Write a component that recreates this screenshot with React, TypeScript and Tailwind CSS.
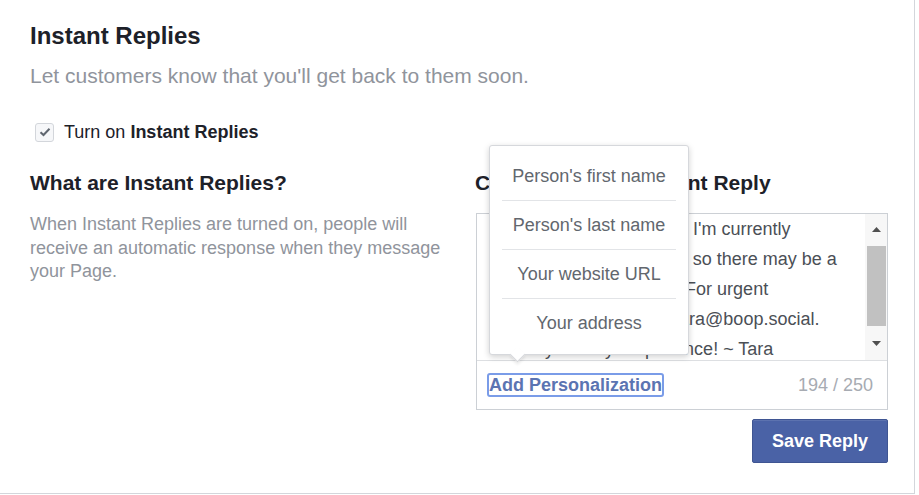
import React from "react";

const font = { fontFamily: '"Liberation Sans", Arial, sans-serif' };

export default function App() {
  return (
    <div className="w-[919px] h-[495px] bg-white overflow-hidden" style={font}>
      <div className="w-[915px] h-[494px] border-r border-b border-[#d3d6db] bg-white pl-[30px] pt-[22px]">
        <h1 className="text-[24px] leading-[27px] font-bold text-[#1d2129]">Instant Replies</h1>
        <p className="mt-[14px] text-[21px] leading-[26px] text-[#90949c]">
          Let customers know that you'll get back to them soon.
        </p>
        <div className="mt-[33px] flex items-center h-[20px]">
          <div className="ml-[5px] w-[19px] h-[19px] rounded-[3px] border border-[#d3d6db] bg-[#f6f7f9] flex items-center justify-center">
            <svg width="12" height="10" viewBox="0 0 12 10">
              <path d="M1.5 5.2 L4.5 8 L10.5 1.8" fill="none" stroke="#606770" strokeWidth="2" />
            </svg>
          </div>
          <span className="ml-[10px] text-[18px] text-[#1d2129]">
            Turn on <b>Instant Replies</b>
          </span>
        </div>
        <div className="mt-[28px] flex">
          <div className="w-[445px]">
            <h2 className="text-[21px] leading-[26px] font-bold text-[#1d2129]">What are Instant Replies?</h2>
            <p className="mt-[17px] w-[430px] text-[18px] leading-[23.5px] text-[#90949c]">
              When Instant Replies are turned on, people will receive an automatic response when they message your Page.
            </p>
          </div>
          <div className="w-[413px] relative">
            <h2 className="text-[21px] leading-[26px] font-bold text-[#1d2129]">Customize Your Instant Reply</h2>
            <div className="mt-[17px] ml-[1px] border border-[#ccd0d5] bg-white">
              <div className="h-[147px] flex border-b border-[#dddfe2]">
                <div className="flex-1 pl-[13px] text-[18px] leading-[30px] text-[#4b4f56] whitespace-nowrap overflow-hidden">
                  <div>Thanks for the message! I'm currently</div>
                  <div>out of the office all week, so there may be a</div>
                  <div>a delay in my response. For urgent</div>
                  <div>matters, kindly contact tara@boop.social.</div>
                  <div>Thank you for your patience! ~ Tara</div>
                </div>
                <div className="w-[22px] flex flex-col items-center bg-[#f7f7f7]">
                  <div className="h-[30px] flex items-center justify-center">
                    <svg width="9" height="5" viewBox="0 0 9 5"><path d="M0 5 L4.5 0 L9 5 Z" fill="#505050" /></svg>
                  </div>
                  <div className="w-[19px] h-[80px] bg-[#c1c1c1] mt-[2px]" />
                  <div className="flex-1 flex items-center justify-center">
                    <svg width="9" height="5" viewBox="0 0 9 5"><path d="M0 0 L9 0 L4.5 5 Z" fill="#505050" /></svg>
                  </div>
                </div>
              </div>
              <div className="h-[48px] flex items-center justify-between pl-[12px] pr-[14px]">
                <span className="text-[18px] leading-[20px] font-bold text-[#5b74b2] outline outline-2 outline-[#7a9ce8] rounded-[1px]">
                  Add Personalization
                </span>
                <span className="text-[18px] text-[#a7abb2]">194 / 250</span>
              </div>
            </div>
            <div className="flex justify-end mt-[9px]">
              <button className="w-[136px] h-[44px] rounded-[2px] bg-[#4a62a6] border border-[#3f5592] text-white text-[18px] font-bold shadow-[inset_0_1px_0_rgba(255,255,255,0.1)]">
                Save Reply
              </button>
            </div>

            <div className="absolute left-[14px] top-[-25px] w-[200px] bg-white rounded-[3px] border border-[#d6d8dc] shadow-[0_2px_6px_rgba(0,0,0,0.18)] py-[6px] px-[12px]">
              {["Person's first name", "Person's last name", "Your website URL", "Your address"].map((t, i) => (
                <div
                  key={t}
                  className={
                    "h-[49px] flex items-center justify-center text-[18px] text-[#62676e] " +
                    (i < 3 ? "border-b border-[#e2e4e7]" : "")
                  }
                >
                  {t}
                </div>
              ))}
              <div className="absolute left-[22px] bottom-[-6px] w-[11px] h-[11px] bg-white rotate-45 border-r border-b border-[#d6d8dc] shadow-[2px_2px_3px_rgba(0,0,0,0.08)]" />
            </div>
          </div>
        </div>
      </div>
    </div>
  );
}
